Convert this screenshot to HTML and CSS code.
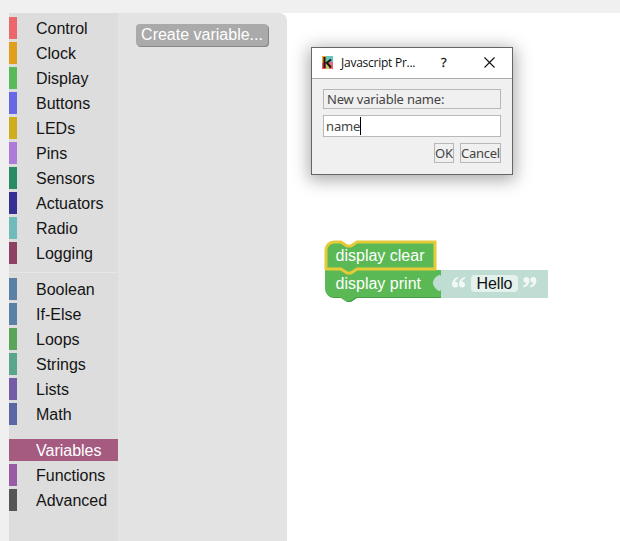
FILE: index.html
```html
<!DOCTYPE html>
<html lang="en">
<head>
<meta charset="utf-8">
<title>Block editor</title>
<link rel="stylesheet" href="styles.css">
</head>
<body>
<div class="editor">
  <nav class="toolbox">
    <ul class="group">
      <li class="category control">Control</li>
      <li class="category clock">Clock</li>
      <li class="category display">Display</li>
      <li class="category buttons">Buttons</li>
      <li class="category leds">LEDs</li>
      <li class="category pins">Pins</li>
      <li class="category sensors">Sensors</li>
      <li class="category actuators">Actuators</li>
      <li class="category radio">Radio</li>
      <li class="category logging">Logging</li>
    </ul>
    <hr class="separator">
    <ul class="group">
      <li class="category boolean">Boolean</li>
      <li class="category if-else">If-Else</li>
      <li class="category loops">Loops</li>
      <li class="category strings">Strings</li>
      <li class="category lists">Lists</li>
      <li class="category math">Math</li>
    </ul>
    <hr class="separator plain">
    <ul class="group">
      <li class="category variables selected">Variables</li>
      <li class="category functions">Functions</li>
      <li class="category advanced">Advanced</li>
    </ul>
  </nav>
  <aside class="flyout"><button class="create">Create variable...</button></aside>
  <main class="workspace">
    <svg class="blocks" width="230" height="68" viewBox="320 237 230 68">
      <path fill="#469e46" d="M326 271V290a8 8 0 0 0 8 8H341l6 4h4l6-4H442V271z"/>
      <path fill="#5ab955" d="M325 270H340l6 4h4l6-4H441V297H356l-6 4h-4l-6-4H333a8 8 0 0 1-8-8z"/>
      <path fill="#bfddd3" d="M441 270H548V298H441V289c0 5-8-1-8-6s8-11 8-6z"/>
      <path fill="#5ab955" stroke="#e5cb38" stroke-width="3" d="M326 250a8 8 0 0 1 8-8H341l6 4h4l6-4H435V269H357l-6 4h-4l-6-4H326z"/>
      <rect x="471" y="275" width="47" height="17" rx="4" fill="#e5f1ed"/>
      <g fill="#f1f8f5">
        <path id="quote" d="M458 277c-4 1-6 4-6 7 0 2 1 3.500 3 3.500s3-1.300 3-3-1.200-2.700-3-2.700c.3-1.400 1.500-2.700 3.500-3.500zM465 277c-4 1-6 4-6 7 0 2 1 3.500 3 3.500s3-1.300 3-3-1.200-2.700-3-2.700c.3-1.400 1.500-2.700 3.500-3.500z"/>
        <use href="#quote" transform="rotate(180 494.200 282.200)"/>
      </g>
      <g class="block-text">
        <text x="335.500" y="261" textLength="89">display clear</text>
        <text x="335.500" y="289" textLength="85.500">display print</text>
        <text class="field" x="476.500" y="289" textLength="36">Hello</text>
      </g>
    </svg>
  </main>
</div>
<section class="dialog">
  <header class="titlebar">
    <svg class="logo" width="12" height="13" viewBox="0 0 12 13">
      <path fill="#e9a52d" d="M0 0h4v7H0z"/><path fill="#ed5269" d="M0 7h4v6H0z"/>
      <path fill="#63c6b8" d="M4 0h7v6H4z"/><path fill="#c4cf58" d="M4 6h4v7H4z"/><path fill="#ee667c" d="M7 6h4v7H7z"/>
      <path fill="none" stroke="#171717" stroke-width="2" d="M2.500 1v11M9 3.500 4 7.500M5 7l4 4.500"/>
    </svg>
    <span class="title">Javascript Pr...</span>
    <span class="help">?</span>
    <svg class="close" width="11" height="11" viewBox="0 0 11 11"><path fill="none" stroke="#111" stroke-width="1.100" d="m.5.5 10 10m0-10-10 10"/></svg>
  </header>
  <div class="content">
    <div class="prompt">New variable name:</div>
    <div class="entry">name<span class="caret"></span></div>
    <div class="actions"><button class="ok">OK</button><button class="cancel">Cancel</button></div>
  </div>
</section>
</body>
</html>
```
FILE: styles.css
```css
* { box-sizing: border-box; }
body { margin: 0; height: 541px; overflow: hidden; background: #f0f0f0; font: 16px/22px "Liberation Sans", Arial, sans-serif; position: relative; }
.editor { display: flex; height: 541px; padding: 13px 0 0 9px; }
.toolbox { width: 109px; padding-top: 4px; background: #ddd; }
.group { display: flex; flex-direction: column; gap: 3px; margin: 0; padding: 0; list-style: none; }
.separator { height: 1px; margin: 8px 0 5px; border: 0; background: #e6e6e6; }
.plain { background: none; }
.category { height: 22px; padding-left: 19px; border-left: 8px solid; color: #141414; line-height: 24px; white-space: nowrap; }
.control { border-color: #eb676b; }
.clock { border-color: #df9f1c; }
.display { border-color: #5ab95a; }
.buttons { border-color: #6a67e5; }
.leds { border-color: #d0ad1c; }
.pins { border-color: #ad7cda; }
.sensors { border-color: #278b64; }
.actuators { border-color: #353094; }
.radio { border-color: #70babb; }
.logging { border-color: #8d4263; }
.boolean { border-color: #5b80a5; }
.if-else { border-color: #5b80a8; }
.loops { border-color: #5ba55b; }
.strings { border-color: #5ba58c; }
.lists { border-color: #745ba5; }
.math { border-color: #5b67a5; }
.variables { border-color: #a55b80; }
.functions { border-color: #995ba5; }
.advanced { border-color: #555; }
.selected { background: #a55b80; color: #fff; }
.flyout { width: 169px; padding: 11px 0 0 18px; background: #e3e3e3; box-shadow: 8px 0 #fff; border-top-right-radius: 8px; z-index: 1; }
.create { display: block; width: 132px; height: 22px; padding: 0; border: 0; border-radius: 4px; background: #aaa; box-shadow: 1px 1px #858585; color: #fff; font: 16px/20px "Liberation Sans", Arial, sans-serif; white-space: nowrap; }
.workspace { flex: 1; background: #fff; }
.blocks { display: block; margin: 224px 0 0 33px; overflow: visible; }
.block-text { fill: #fff; font-size: 16px; }
.field { fill: #111; }
.dialog { position: absolute; z-index: 2; left: 311px; top: 47px; width: 202px; height: 128px; border: 1px solid #666; background: #f0f0f0; box-shadow: 0 3px 16px 2px rgba(0,0,0,.34); font: 13px/18px "Noto Sans", sans-serif; color: #444; }
.titlebar { display: flex; align-items: center; height: 31px; padding: 0 17px 2px 10px; border-bottom: 1px solid #aaa; background: #fff; color: #111; font: 12px/18px "Open Sans", sans-serif; }
.title { width: 76px; margin: 2px 0 0 7px; white-space: nowrap; letter-spacing: -.25px; }
.help { margin-left: 24px; font-size: 13px; -webkit-text-stroke: .3px #111; }
.close { margin-left: auto; }
.content { display: flex; flex-direction: column; gap: 6px; padding: 10px 11px; }
.prompt { height: 20px; padding-left: 3px; border: 1px solid #b8b8b8; letter-spacing: -.2px; }
.entry { display: flex; align-items: center; height: 22px; padding-left: 2px; border: 1px solid #b8b8b8; background: #fff; letter-spacing: -.15px; }
.caret { width: 1px; height: 18px; background: #000; }
.actions { display: flex; justify-content: flex-end; gap: 6px; }
.actions button { display: flex; height: 20px; padding: 0; border: 1px solid #b8b8b8; background: #f0f0f0; color: #444; font: 13px/18px "Noto Sans", sans-serif; letter-spacing: -.25px; white-space: nowrap; }
.ok { width: 20px; }
.cancel { width: 41px; }
```
